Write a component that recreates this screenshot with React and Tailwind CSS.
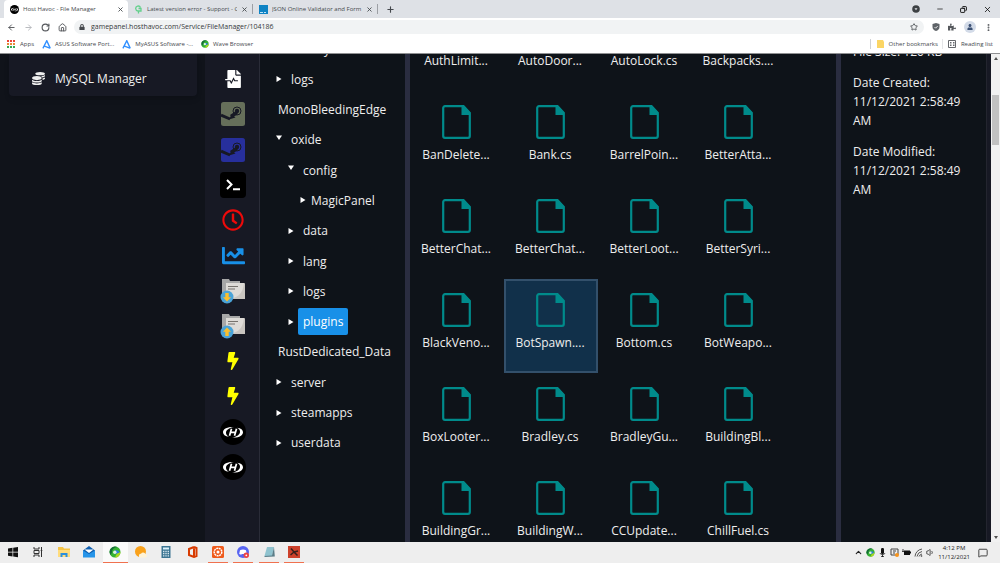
import React, { useState } from 'react';
import {
  FaBolt,
  FaChartLine,
  FaCoins,
  FaFileMedicalAlt,
  FaPuzzlePiece,
  FaRegClock,
  FaLock,
  FaUser,
} from 'react-icons/fa';
import {
  ArrowLeft,
  ArrowRight,
  ChevronUp,
  Copy,
  House,
  MessageSquare,
  Minus,
  MoreVertical,
  Plus,
  RotateCw,
  Star,
  Volume1,
  X,
} from 'lucide-react';

const HavocLogo = ({ className }) => (
  <svg viewBox="0 0 26 26" className={className}>
    <circle cx="13" cy="13" r="13" fill="#000" />
    <path d="M14 8C7 7.500 3 10 3 13.300c0 2.200 2 4 6 4.500-2-1-3-2.300-3-4C6 11 9 8.800 14 8z" fill="#fff" />
    <path d="M12 18.500c7 .5 11-2 11-5.300 0-2.200-2-4-6-4.500 2 1 3 2.300 3 4 0 2.800-3 5-8 5.800z" fill="#fff" />
    <path d="M11.500 9.800 9.500 16.800M16.500 9.800l-2 7M10.500 13.300h5" fill="none" stroke="#fff" strokeWidth="1.700" />
  </svg>
);

const SteamSquare = ({ className }) => (
  <svg viewBox="0 0 24 24" className={className}>
    <rect width="24" height="24" rx="2.500" fill="currentColor" />
    <path d="M0 13l9 4" fill="none" stroke="#171924" strokeWidth="3" />
    <path d="M8 17.500l2.500-5 4 3z" fill="#171924" />
    <path d="M10 14.500l6-4" stroke="#171924" strokeWidth="3.500" />
    <circle cx="16" cy="9" r="4" fill="none" stroke="#171924" strokeWidth="1" />
    <circle cx="16" cy="9" r="2.200" fill="#171924" />
  </svg>
);

const WaveLogo = ({ className }) => (
  <svg viewBox="0 0 12 12" className={className}>
    <circle cx="6" cy="6" r="5.500" fill="#35b234" />
    <path d="M.5 6A5.500 5.500 0 0 1 9 1.400C6 1 3 3 3 6.500L1.500 9z" fill="#166b3a" />
    <path d="M6 11.500A5.500 5.500 0 0 0 11.500 6L8 7z" fill="#a8d820" />
    <path d="M6 4.500c2-.5 3.500.2 4.500 2L7 8z" fill="#2a7de1" />
    <circle cx="5.800" cy="6.200" r="1.700" fill="#dff3e4" />
  </svg>
);

const AsusLogo = () => (
  <svg viewBox="0 0 10 10" className="w-[9px] h-[9px]">
    <path d="M1 9.300 5.300.8l3.900 8.500M2.700 6.800l6 2.300" fill="none" stroke="#2f8fff" strokeWidth="1.500" />
  </svg>
);

const FolderTransfer = ({ up }) => (
  <svg viewBox="0 0 26 26" className="w-[26px] h-[26px]">
    <path d="M2 1h7l1 2h10v18H2z" fill="#a7a7a7" />
    <path d="M6 5h18l1 1v15H6z" fill="#dedbd7" />
    <path d="M6 21c11 0 17-5 18-16l1 1v15z" fill="#c9c5c0" />
    <path d="M8 8.500h10M8 11h7" stroke="#77736e" strokeWidth="1" />
    <circle cx="7" cy="19" r="6.500" fill="#4aa3d8" />
    <path
      d={up ? 'M7 14.500l4 4.200H8.700V23H5.300v-4.300H3z' : 'M7 23.500l4-4.200H8.700V15H5.300v4.300H3z'}
      fill="#fbbf2c"
    />
  </svg>
);

const FileIcon = () => (
  <svg viewBox="0 0 29 34" className="w-[29px] h-[34px]">
    <path d="M3 1.200h18.500L27.800 8v23a1.800 1.800 0 0 1-1.800 1.800H3A1.800 1.800 0 0 1 1.200 31V3A1.800 1.800 0 0 1 3 1.200z" fill="none" stroke="#008b8b" strokeWidth="2.200" />
    <path d="M19.500 1h2.500l6 6.500V10h-8.500z" fill="#008b8b" />
  </svg>
);

const tools = [
  { name: 'Logs', icon: <FaFileMedicalAlt className="w-[18px] h-[18px] text-white" /> },
  { name: 'Steam update', icon: <SteamSquare className="w-6 h-6 text-[#666f5a]" /> },
  { name: 'Steam validate', icon: <SteamSquare className="w-6 h-6 text-[#272f9c]" /> },
  {
    name: 'Console',
    icon: (
      <svg viewBox="0 0 26 26" className="w-[26px] h-[26px]">
        <rect width="26" height="26" rx="4" fill="#000" />
        <path d="M7 8l4.500 4.500L7 17M13 17.200h7" fill="none" stroke="#fff" strokeWidth="2" />
      </svg>
    ),
  },
  { name: 'Schedule', icon: <FaRegClock className="w-[22px] h-[22px] text-[#ee0a0a]" /> },
  { name: 'Statistics', icon: <FaChartLine className="w-[23px] h-[23px] text-[#1890e8]" /> },
  { name: 'Download', icon: <FolderTransfer /> },
  { name: 'Upload', icon: <FolderTransfer up /> },
  { name: 'Quick action 1', icon: <FaBolt className="w-[18px] h-[18px] text-[#ffff00]" /> },
  { name: 'Quick action 2', icon: <FaBolt className="w-[18px] h-[18px] text-[#ffff00]" /> },
  { name: 'Host 1', icon: <HavocLogo className="w-[26px] h-[26px]" /> },
  { name: 'Host 2', icon: <HavocLogo className="w-[26px] h-[26px]" /> },
];

const folders = [
  { name: 'HarmonyMods', pad: 'pl-[13px]' },
  { name: 'logs', pad: 'pl-4', arrow: 'right' },
  { name: 'MonoBleedingEdge', pad: 'pl-[13px]' },
  { name: 'oxide', pad: 'pl-4', arrow: 'down' },
  { name: 'config', pad: 'pl-7', arrow: 'down' },
  { name: 'MagicPanel', pad: 'pl-10', arrow: 'right', tight: true },
  { name: 'data', pad: 'pl-7', arrow: 'right' },
  { name: 'lang', pad: 'pl-7', arrow: 'right' },
  { name: 'logs', pad: 'pl-7', arrow: 'right' },
  { name: 'plugins', pad: 'pl-7', arrow: 'right' },
  { name: 'RustDedicated_Data', pad: 'pl-[13px]' },
  { name: 'server', pad: 'pl-4', arrow: 'right' },
  { name: 'steamapps', pad: 'pl-4', arrow: 'right' },
  { name: 'userdata', pad: 'pl-4', arrow: 'right' },
];

const files = [
  'AuthLimit...', 'AutoDoor...', 'AutoLock.cs', 'Backpacks....',
  'BanDelete...', 'Bank.cs', 'BarrelPoin...', 'BetterAtta...',
  'BetterChat...', 'BetterChat...', 'BetterLoot...', 'BetterSyri...',
  'BlackVeno...', 'BotSpawn....', 'Bottom.cs', 'BotWeapo...',
  'BoxLooter...', 'Bradley.cs', 'BradleyGu...', 'BuildingBl...',
  'BuildingGr...', 'BuildingW...', 'CCUpdate...', 'ChillFuel.cs',
];

const tabs = [
  { title: 'Host Havoc - File Manager', icon: <HavocLogo className="w-[9px] h-[9px]" />, active: true },
  {
    title: 'Latest version error - Support - C',
    icon: (
      <svg viewBox="0 0 9 9" className="w-[9px] h-[9px]">
        <path d="M6.500 2.500A2.500 2.500 0 1 0 4 6h3V3.500H4.500M4.500 6v2.500" fill="none" stroke="#63d08c" strokeWidth="1.300" />
      </svg>
    ),
  },
  {
    title: 'JSON Online Validator and Form',
    icon: (
      <svg viewBox="0 0 9 9" className="w-[9px] h-[9px]">
        <rect width="9" height="9" fill="#0f83c4" />
        <path d="M1 7.500h3M5 7.500h2" stroke="#bfe3f7" strokeWidth="1" />
      </svg>
    ),
  },
];

const taskbarApps = [
  {
    name: 'Start',
    icon: <path d="M1 2.500l4.500-.7v4H1zM6.200 1.700 11 1v4.800H6.200zM1 6.500h4.500v4L1 9.800zM6.200 6.500H11v4.800l-4.800-.7z" fill="#111" />,
  },
  {
    name: 'Task View',
    icon: <path d="M2 1v2h5V1M2 11V9h5v2M2 4.500h5v3H2zM9.500 1v10M8.700 4.500h1.600" fill="none" stroke="#333" strokeWidth="1" />,
  },
  {
    name: 'File Explorer',
    icon: (
      <>
        <path d="M0 1h5l1 1.500h6V11H0z" fill="#f6c445" />
        <path d="M0 4h12v7H0z" fill="#ffdc7c" />
        <path d="M2.500 11V7h7v4h-2V9h-3v2z" fill="#2b8fdd" />
      </>
    ),
  },
  {
    name: 'Mail',
    icon: (
      <>
        <path d="M0 4.500 6 0l6 4.500V11H0z" fill="#0f5fb0" />
        <path d="M1.500 3.500h9L6 7z" fill="#fff" />
        <path d="M0 4.500 6 8l6-3.500V11.500H0z" fill="#2795e9" />
      </>
    ),
  },
  { name: 'Wave Browser', logo: <WaveLogo className="w-3 h-3" />, open: true, active: true },
  {
    name: 'Weather',
    icon: (
      <>
        <circle cx="5.500" cy="5.500" r="5.500" fill="#f9a11b" />
        <path d="M5 11.500a2 2 0 0 1 1-3.800 2.500 2.500 0 0 1 4.500.3A1.800 1.800 0 0 1 10.500 11.500z" fill="#fff3d6" />
      </>
    ),
  },
  {
    name: 'Calculator',
    icon: (
      <>
        <rect x="1.500" y="0" width="9" height="12" fill="#3c7592" />
        <path d="M3 1.500h6v2H3z" fill="#d9f1fb" />
        <path d="M3 5.500h6M3 7.700h6M3 9.900h6" stroke="#d6e6ee" strokeWidth="1.300" strokeDasharray="1.400 .9" />
      </>
    ),
  },
  {
    name: 'Office',
    icon: <path d="M8 1 3 3v6l5 2V2.500M3 9l5 2 2.500-1V2L8 1" fill="none" stroke="#d83b01" strokeWidth="2" />,
  },
  {
    name: 'Recorder',
    open: true,
    icon: (
      <>
        <rect width="12" height="12" rx="1.500" fill="#ef5b1c" />
        <circle cx="6" cy="6" r="3.800" fill="none" stroke="#fff" strokeWidth="1.500" strokeDasharray="2 .6" />
        <circle cx="6" cy="6" r="1.500" fill="#fff" />
      </>
    ),
  },
  {
    name: 'Discord',
    open: true,
    icon: (
      <>
        <circle cx="6" cy="6" r="6" fill="#5865f2" />
        <path d="M3 4.200c2-1 4-1 6 0l.8 3.800-2 .8-.6-.8H4.800l-.6.800-2-.8z" fill="#fff" />
        <circle cx="9.300" cy="9.300" r="2.700" fill="#ed4245" />
        <circle cx="9.300" cy="9.300" r=".9" fill="#fff" />
      </>
    ),
  },
  {
    name: 'Notepad',
    open: true,
    icon: (
      <>
        <path d="M4 1h7L9 10H1.500z" fill="#8fc3cf" />
        <path d="M11 1l.8 9.500L1.500 11v-1L9 9.500z" fill="#5a7d88" />
      </>
    ),
  },
  {
    name: 'Rust',
    open: true,
    icon: (
      <>
        <rect width="12" height="12" fill="#cd412b" />
        <path d="M3 2.500l3 3.500M6 6l4-1M6 6l3.500 3.500M6 6l-3.500 3" stroke="#37201c" strokeWidth="1.500" fill="none" />
      </>
    ),
  },
];

// Collapsed arrows sit on the text's middle, expanded ones a little above it
const TreeArrow = ({ dir }) =>
  dir === 'down' ? (
    <svg viewBox="0 0 6 10" className="w-[6px] h-[10px] shrink-0">
      <path d="M0 .5h6L3 5z" fill="#fff" />
    </svg>
  ) : (
    <svg viewBox="0 0 6 6" className="w-[6px] h-[6px] shrink-0">
      <path d="M.5 0 5.500 3l-5 3z" fill="#fff" />
    </svg>
  );

const BrowserChrome = () => (
  <header className="relative z-10 shrink-0 bg-[#dee1e6] text-[#45494d] border-b border-[#8f9092]">
    {/* Tab strip */}
    <div className="flex h-[18px] items-center pl-1">
      {tabs.map((tab) => (
        <div
          key={tab.title}
          className={
            tab.active
              ? 'flex h-full w-[124px] items-center gap-1 bg-white rounded-t-[4px] pl-[6px] pr-1'
              : 'flex h-[10px] w-[125px] items-center gap-1 border-r border-[#9da0a5] pl-[6px] pr-1'
          }
        >
          <span className="shrink-0">{tab.icon}</span>
          <span className="flex-1 overflow-hidden whitespace-nowrap text-[6px] leading-[10px]">{tab.title}</span>
          <button aria-label="Close tab" className="shrink-0">
            <X className="w-[7px] h-[7px]" strokeWidth={3} />
          </button>
        </div>
      ))}
      <button aria-label="New tab" className="ml-2">
        <Plus className="w-[9px] h-[9px]" strokeWidth={3} />
      </button>
      <div className="ml-auto flex items-center gap-4 pr-2 text-black">
        <svg viewBox="0 0 8 8" className="w-2 h-2">
          <circle cx="4" cy="4" r="3.800" fill="#3c4043" />
          <path d="M2.500 3.200h3L4 5.300z" fill="#dee1e6" />
        </svg>
        <button aria-label="Minimize"><Minus className="w-2 h-2" strokeWidth={2} /></button>
        <button aria-label="Restore"><Copy className="w-[7px] h-[7px] -scale-x-100" strokeWidth={3} /></button>
        <button aria-label="Close"><X className="w-[9px] h-[9px]" strokeWidth={2} /></button>
      </div>
    </div>

    {/* Address bar */}
    <div className="flex h-[18px] items-center bg-white pl-[7px] pr-[7px]">
      <div className="flex items-center gap-2 pr-[7px] text-[#55585c]">
        <button aria-label="Back"><ArrowLeft className="w-[9px] h-[9px]" strokeWidth={2.5} /></button>
        <button aria-label="Forward" className="text-[#b5b8bc]"><ArrowRight className="w-[9px] h-[9px]" strokeWidth={2.5} /></button>
        <button aria-label="Reload"><RotateCw className="w-[9px] h-[9px]" strokeWidth={3} /></button>
        <button aria-label="Home"><House className="w-[9px] h-[9px]" strokeWidth={2.5} /></button>
      </div>
      <div className="flex h-[14px] flex-1 items-center gap-[6px] rounded-full bg-[#f1f3f4] pl-[5px] pr-[6px]">
        <FaLock className="w-[6px] h-[6px] shrink-0" />
        <input
          aria-label="Address"
          className="min-w-0 flex-1 bg-transparent text-[7px] leading-[12px] text-[#35383b] outline-none"
          defaultValue="gamepanel.hosthavoc.com/Service/FileManager/104186"
        />
        <Star className="w-2 h-2" strokeWidth={2.5} />
      </div>
      <div className="flex items-center gap-2 pl-2 text-[#55585c]">
        <svg viewBox="0 0 8 8" className="w-2 h-2">
          <path d="M4 0l3.500 1v3C7.500 6 6 7.500 4 8 2 7.500.5 6 .5 4V1z" fill="#5f6368" />
          <path d="M2.500 4l1.200 1.200 2-2.200" fill="none" stroke="#fff" strokeWidth=".8" />
        </svg>
        <FaPuzzlePiece className="w-2 h-2" />
        <span className="flex h-[12px] w-[12px] items-center justify-center rounded-full bg-[#d3dbe8] text-[#3d5275]">
          <FaUser className="w-[6px] h-[6px]" />
        </span>
        <button aria-label="Menu"><MoreVertical className="w-[9px] h-[9px]" strokeWidth={3} /></button>
      </div>
    </div>

    {/* Bookmarks */}
    <nav className="flex h-[17px] items-center gap-2 bg-white pb-px pl-[7px] pr-[7px] text-[6px] leading-[10px]">
      <a href="#apps" className="flex items-center gap-[5px]">
        <svg viewBox="0 0 8 8" className="w-2 h-2">
          <path d="M0 1h8" stroke="#ea4335" strokeWidth="2" strokeDasharray="2 1" />
          <path d="M0 4h8" stroke="#e98a35" strokeWidth="2" strokeDasharray="2 1" />
          <path d="M0 7h8" stroke="#34a853" strokeWidth="2" strokeDasharray="2 1" />
        </svg>
        Apps
      </a>
      <a href="#asus" className="flex items-center gap-1"><AsusLogo />ASUS Software Port...</a>
      <a href="#myasus" className="flex items-center gap-1"><AsusLogo />MyASUS Software -...</a>
      <a href="#wave" className="flex items-center gap-1"><WaveLogo className="w-2 h-2" />Wave Browser</a>
      <a href="#other" className="ml-auto flex items-center gap-[5px] border-l border-[#cfd1d4] pl-[6px]">
        <svg viewBox="0 0 7 8" className="w-[7px] h-2"><path d="M0 0h6l1 2v6H0z" fill="#fbd564" /></svg>
        Other bookmarks
      </a>
      <a href="#reading" className="-ml-1 flex items-center gap-[5px] border-l border-[#e4e5e7] pl-[5px]">
        <svg viewBox="0 0 8 8" className="w-2 h-2">
          <path d="M.5.5h7v7h-7zM2 2.500h1.500M2 4h1.500M2 5.500h1.500M5 2.500h1.500M5 4h1.500M5 5.500h1.500" fill="none" stroke="#55585c" strokeWidth=".9" />
        </svg>
        Reading list
      </a>
    </nav>
  </header>
);

const Taskbar = () => (
  <footer className="flex h-[21px] shrink-0 items-center bg-[#eeeeee] pr-3 text-[#222]">
    <div className="flex h-full w-[307px] justify-between">
      {taskbarApps.map((app) => (
        <button
          key={app.name}
          aria-label={app.name}
          className={`flex w-[25px] flex-col items-center justify-between pt-1 ${app.active ? 'bg-[#fafafa]' : ''}`}
        >
          {app.logo || <svg viewBox="0 0 12 12" className="w-3 h-3">{app.icon}</svg>}
          <span className={`h-px ${app.active ? 'w-full' : 'w-5'} ${app.open ? 'bg-[#f0714f]' : ''}`} />
        </button>
      ))}
    </div>
    <div className="ml-auto flex items-center gap-[3px]">
      <ChevronUp className="w-[9px] h-[9px]" strokeWidth={3} />
      <WaveLogo className="w-[9px] h-[9px]" />
      <svg viewBox="0 0 9 9" className="w-[9px] h-[9px]">
        <rect x="3" y="0" width="3" height="6" rx="1.200" fill="#111" />
        <path d="M2 5c.5 2 4.500 2 5 0M4.500 6.500V9M3 8.600h3" fill="none" stroke="#111" strokeWidth=".8" />
      </svg>
      <svg viewBox="0 0 9 9" className="w-[9px] h-[9px]">
        <path d="M1 1h7v6H1zM3 3h3M3 5h2" fill="none" stroke="#444" />
        <circle cx="7" cy="7" r="2" fill="#f7941d" />
      </svg>
      <svg viewBox="0 0 9 9" className="w-[9px] h-[9px]">
        <path d="M0 2h2M0 3.500h3" stroke="#111" strokeWidth=".8" />
        <path d="M2 2.500h6v1h1v2H8v1.500H2z" fill="#111" />
      </svg>
      <svg viewBox="0 0 9 9" className="w-[9px] h-[9px]">
        <path d="M1 8.500A8 8 0 0 1 8 1M3 8.500A6 6 0 0 1 8 3.500M5 8.500A4 4 0 0 1 8 6" fill="none" stroke="#444" strokeWidth=".9" />
        <circle cx="7.500" cy="8" r=".8" fill="#333" />
      </svg>
      <Volume1 className="w-[9px] h-[9px]" />
      <div className="text-center text-[6px] leading-[9px]">
        <div>4:12 PM</div>
        <div>11/12/2021</div>
      </div>
      <button aria-label="Notifications" className="ml-[5px]">
        <MessageSquare className="w-[10px] h-[10px]" />
      </button>
    </div>
  </footer>
);

const App = () => {
  const [folder, setFolder] = useState(9);
  const [file, setFile] = useState(13);

  return (
    <div className="flex h-screen flex-col overflow-hidden font-['Open_Sans','Noto_Sans',sans-serif]">
      <BrowserChrome />

      <main className="flex min-h-0 flex-1 overflow-hidden bg-[#0e1319] text-[12px] leading-[19px] text-[#eeeeee]">
        {/* Sidebar */}
        <aside className="w-[205px] shrink-0 bg-[#10131a] pl-[9px] pr-2">
          <a href="#mysql" className="flex h-[42px] items-center gap-[10px] rounded-b-sm bg-[#171924] pl-[23px] pt-[6px] shadow-md">
            <FaCoins className="w-[13px] h-[13px]" />
            MySQL Manager
          </a>
        </aside>

        {/* Tools */}
        <div className="w-[55px] shrink-0 border-r border-[#2a2c38] bg-[#171924] pl-0.5 pt-3">
          <div className="flex h-[414px] flex-col items-center justify-between">
            {tools.map((tool) => (
              <button key={tool.name} aria-label={tool.name} className="flex h-[26px] w-[26px] items-center justify-center">
                {tool.icon}
              </button>
            ))}
          </div>
        </div>

        {/* Folder tree */}
        <ul className="-mt-5 flex h-[424px] w-[145px] shrink-0 flex-col justify-between">
          {folders.map((item, i) => (
            <li key={i} className={`flex h-[30px] items-center ${item.pad}`}>
              {item.arrow && <TreeArrow dir={item.arrow} />}
              <button
                onClick={() => setFolder(i)}
                className={`h-[27px] rounded-[2px] px-[5px] ${item.arrow && !item.tight ? 'ml-1' : ''} ${
                  folder === i ? 'bg-[#1890e8] text-white' : ''
                }`}
              >
                {item.name}
              </button>
            </li>
          ))}
        </ul>

        {/* Files */}
        <section className="min-w-0 flex-1 border-x-[5px] border-[#2a2d40]">
          <div className="-mt-[57px] grid grid-cols-[repeat(auto-fill,94px)]">
            {files.map((name, i) => (
              <button
                key={i}
                onClick={() => setFile(i)}
                className={`flex h-[94px] flex-col items-center gap-[6px] whitespace-nowrap border-2 pr-0.5 pt-3 ${
                  file === i ? 'border-[#33506b] bg-[#11304a]' : 'border-transparent'
                }`}
              >
                <FileIcon />
                <span>{name}</span>
              </button>
            ))}
          </div>
        </section>

        {/* Details */}
        <aside className="w-[146px] shrink-0 border-r border-[#23252f] pl-3 pr-5">
          <div className="-mt-3 flex flex-col gap-3">
            <p>File Size: 120 KB</p>
            <p>Date Created: 11/12/2021 2:58:49 AM</p>
            <p>Date Modified: 11/12/2021 2:58:49 AM</p>
          </div>
        </aside>
        <div className="w-1 shrink-0 bg-[#171924]" />

        {/* Page scrollbar */}
        <div className="flex w-[9px] shrink-0 flex-col items-center bg-[#f1f1f1] py-[3px]">
          <svg viewBox="0 0 4 3" className="w-1 h-[3px]"><path d="M0 3h4L2 0z" fill="#505050" /></svg>
          <div className="mt-[35px] h-[50px] w-[7px] bg-[#c1c1c1]" />
          <svg viewBox="0 0 4 3" className="mt-auto w-1 h-[3px]"><path d="M0 0h4L2 3z" fill="#505050" /></svg>
        </div>
      </main>

      <Taskbar />
    </div>
  );
};

export default App;
